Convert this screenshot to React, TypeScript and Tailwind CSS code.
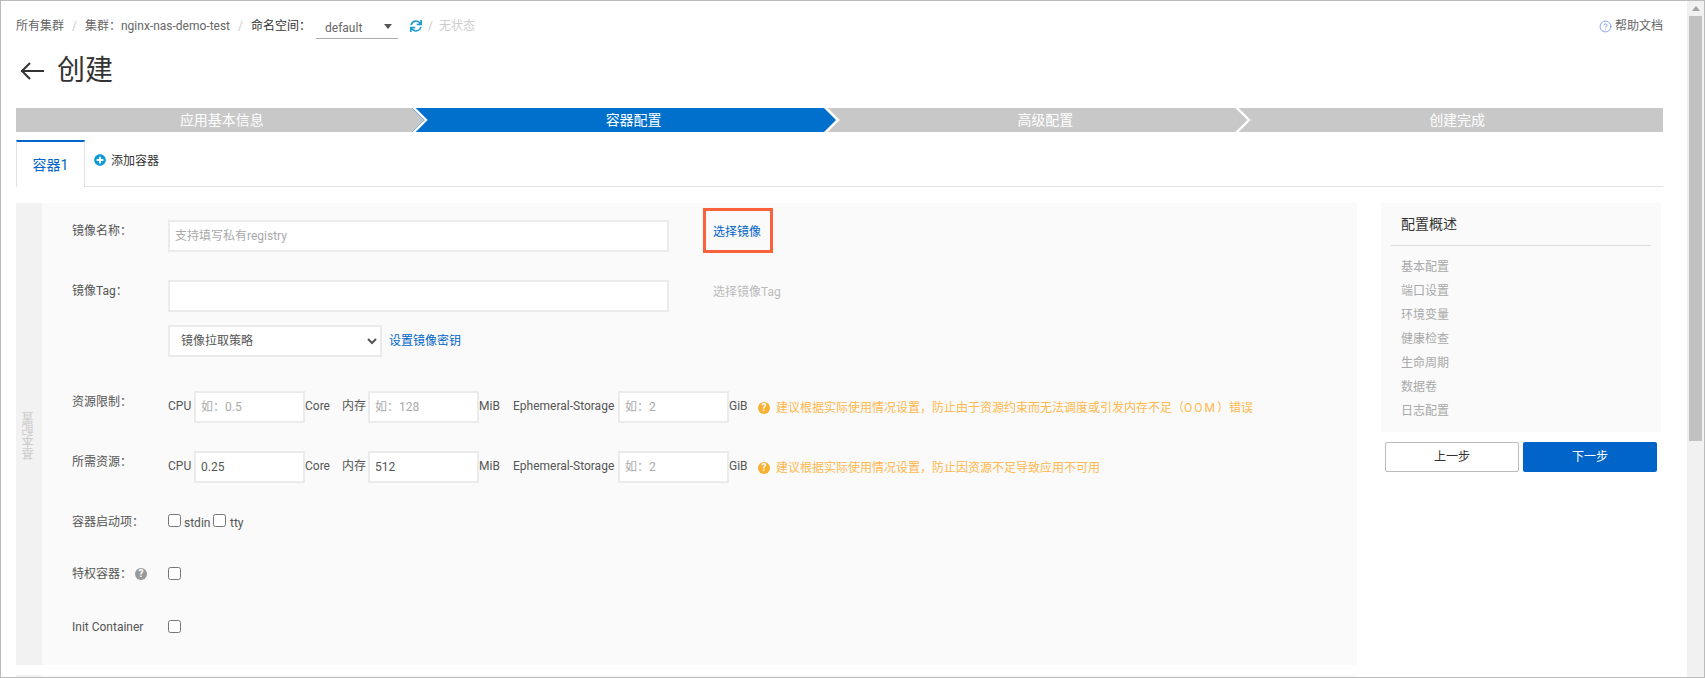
import type { ReactNode } from "react";
import { CircleHelp } from "lucide-react";
import { FaPlusCircle, FaSync } from "react-icons/fa";

const steps = [
  { title: "应用基本信息", active: false },
  { title: "容器配置", active: true },
  { title: "高级配置", active: false },
  { title: "创建完成", active: false },
];

const summary = ["基本配置", "端口设置", "环境变量", "健康检查", "生命周期", "数据卷", "日志配置"];

const inputClass =
  "h-[32px] border-2 border-[#ebebeb] bg-white px-[5px] text-xs text-[#555] outline-none placeholder:text-[#aaa]";

function Hint({ color }: { color: string }) {
  return (
    <span className={`flex h-[12px] w-[12px] shrink-0 items-center justify-center rounded-full text-[10px] leading-none font-bold text-white ${color}`}>
      ?
    </span>
  );
}

function ResourceRow(props: { label: string; cpu?: string; mem?: string; warn: ReactNode; className: string }) {
  return (
    <div className={`flex text-xs text-[#555] ${props.className}`}>
      <label className="w-[126px] shrink-0 pt-[1px] pl-[30px] leading-5">{props.label}</label>
      <span className="w-[26px] pt-[5px] leading-5">CPU</span>
      <input className={`${inputClass} w-[111px]`} placeholder="如：0.5" defaultValue={props.cpu} />
      <span className="w-[37px] pt-[5px] leading-5">Core</span>
      <span className="w-[26px] pt-[5px] leading-5">内存</span>
      <input className={`${inputClass} w-[111px]`} placeholder="如：128" defaultValue={props.mem} />
      <span className="w-[34px] pt-[5px] leading-5">MiB</span>
      <span className="w-[105px] pt-[5px] leading-5 whitespace-nowrap">Ephemeral-Storage</span>
      <input className={`${inputClass} w-[111px]`} placeholder="如：2" />
      <span className="w-[29px] pt-[5px] leading-5">GiB</span>
      <div className="flex h-[32px] items-center gap-[6px] pt-[2px] whitespace-nowrap text-[#ffb84d]">
        <Hint color="bg-[#f7b02f]" />
        <span>{props.warn}</span>
      </div>
    </div>
  );
}

export default function App() {
  return (
    <div className="flex h-[678px] w-[1705px] overflow-hidden border border-[#bbbbbb] bg-white font-['Roboto','Noto_Sans_CJK_SC',sans-serif] text-xs text-[#555]">
      <main className="flex min-w-0 flex-1 flex-col pl-[15px] pr-[24px]">
        <div className="mt-[10px] flex h-[30px] shrink-0 items-center text-[#666]">
          <span>所有集群</span>
          <span className="mx-[8px] text-[#ccc]">/</span>
          <span>集群：nginx-nas-demo-test</span>
          <span className="mx-[8px] text-[#ccc]">/</span>
          <span className="text-[#333]">命名空间：</span>
          <div className="mt-[2px] ml-[5px] flex h-[24px] w-[82px] items-center justify-between border-b border-[#aaa] pr-[6px] pl-[9px]">
            <span className="pt-[2px]">default</span>
            <span className="h-0 w-0 border-x-[4px] border-t-[5px] border-x-transparent border-t-[#555]" />
          </div>
          <FaSync className="ml-[12px] text-[#1f9ad6]" size={12} />
          <span className="mx-[6px] text-[#ccc]">/</span>
          <span className="text-[#ccc]">无状态</span>
          <div className="ml-auto flex items-center gap-[3px]">
            <CircleHelp size={13} strokeWidth={1.4} className="text-[#5d86f0]" />
            <span>帮助文档</span>
          </div>
        </div>

        <div className="flex h-[60px] shrink-0 items-center">
          <svg width="24" height="20" viewBox="0 0 24 20" className="ml-[4px]" fill="none" stroke="#333" strokeWidth="2">
            <path d="M1 10H24M10 2L2 10L10 18" />
          </svg>
          <h1 className="ml-[13px] text-[28px] leading-none font-normal text-[#333]">创建</h1>
        </div>

        <div className="mt-[7px] grid h-[24px] shrink-0 grid-cols-4 text-sm text-white">
          {steps.map((step, i) => (
            <div key={step.title} className={`relative flex items-center justify-center ${step.active ? "bg-[#0070cc]" : "bg-[#c8c8c8]"}`}>
              {step.title}
              {i < 3 && (
                <svg width="16" height="24" viewBox="0 0 16 24" className="absolute top-0 right-0">
                  <path d="M0 0H16V24H0L12 12Z" fill={steps[i + 1].active ? "#0070cc" : "#c8c8c8"} />
                  <path d="M1 -1L14 12L1 25" fill="none" stroke="#fff" strokeWidth="2.4" />
                </svg>
              )}
            </div>
          ))}
        </div>

        <div className="mt-[8px] flex h-[47px] shrink-0 border-b border-[#e2e2e2]">
          <div className="-mb-px flex w-[69px] items-center justify-center border-x border-t-2 border-[#e2e2e2] border-t-[#0064c8] bg-white text-sm text-[#0064c8]">
            容器1
          </div>
          <div className="flex items-start gap-[5px] pt-[11px] pl-[9px] leading-5 text-[#333]">
            <FaPlusCircle size={12} className="mt-[3px] text-[#0f9ad7]" />
            <span>添加容器</span>
          </div>
        </div>

        <div className="mt-[16px] flex min-h-0 flex-1 gap-[24px]">
          <div className="flex w-[1341px] shrink-0 flex-col gap-[10px]">
            <section className="flex h-[462px] shrink-0 bg-[#fafafa]">
              <div className="flex w-[26px] shrink-0 justify-center bg-[#f2f2f2] pt-[209px]">
                <span className="h-fit rotate-180 text-xs text-[#ccc] [writing-mode:vertical-rl]">基本配置</span>
              </div>
              <div className="min-w-0 flex-1">
                <div className="mt-[17px] flex h-[32px]">
                  <label className="w-[126px] shrink-0 pt-[1px] pl-[30px] leading-5">镜像名称：</label>
                  <input className={`${inputClass} w-[501px]`} placeholder="支持填写私有registry" />
                  <div className="-mt-[12px] ml-[34px] h-[45px] w-[70px] shrink-0 border-[3px] border-[#f9623b] pt-[11px] pl-[7px] leading-5 text-[#0064c8]">
                    选择镜像
                  </div>
                </div>
                <div className="mt-[28px] flex h-[32px]">
                  <label className="w-[126px] shrink-0 pt-[1px] pl-[30px] leading-5">镜像Tag：</label>
                  <input className={`${inputClass} w-[501px]`} />
                  <span className="ml-[44px] pt-[2px] leading-5 text-[#bbb]">选择镜像Tag</span>
                </div>
                <div className="mt-[13px] ml-[126px] flex h-[32px] items-center">
                  <select className="h-[32px] w-[214px] border-2 border-[#ebebeb] bg-white pl-[7px] text-xs text-[#555] outline-none">
                    <option>镜像拉取策略</option>
                  </select>
                  <span className="ml-[7px] text-[#0064c8]">设置镜像密钥</span>
                </div>

                <ResourceRow
                  className="mt-[34px]"
                  label="资源限制："
                  warn={
                    <>
                      建议根据实际使用情况设置，防止由于资源约束而无法调度或引发内存不足（<span className="tracking-[2px]">OOM</span>）错误
                    </>
                  }
                />
                <ResourceRow
                  className="mt-[28px]"
                  label="所需资源："
                  cpu="0.25"
                  mem="512"
                  warn="建议根据实际使用情况设置，防止因资源不足导致应用不可用"
                />

                <div className="mt-[31px] flex h-[13px]">
                  <label className="w-[126px] shrink-0 pl-[30px] leading-[17px]">容器启动项：</label>
                  <input type="checkbox" className="m-0 h-[13px] w-[13px]" />
                  <span className="ml-[3px] w-[29px] leading-[18px]">stdin</span>
                  <input type="checkbox" className="m-0 h-[13px] w-[13px]" />
                  <span className="ml-[4px] leading-[18px]">tty</span>
                </div>
                <div className="mt-[40px] flex h-[13px]">
                  <label className="flex w-[126px] shrink-0 items-center gap-[3px] pl-[30px]">
                    特权容器：
                    <Hint color="bg-[#999]" />
                  </label>
                  <input type="checkbox" className="m-0 h-[13px] w-[13px]" />
                </div>
                <div className="mt-[40px] flex h-[13px]">
                  <label className="w-[126px] shrink-0 pl-[30px] leading-[15px]">Init Container</label>
                  <input type="checkbox" className="m-0 h-[13px] w-[13px]" />
                </div>
              </div>
            </section>
            <section className="flex h-[40px] shrink-0 bg-[#fafafa]">
              <div className="w-[26px] bg-[#f2f2f2]" />
            </section>
          </div>

          <aside className="w-[280px] shrink-0">
            <div className="bg-[#fafafa]">
              <div className="mx-[10px] flex h-[43px] items-center border-b border-[#dddddd] pl-[10px] text-sm text-[#333]">配置概述</div>
              <ul className="py-[9px] pl-[20px] text-[#a9a9a9]">
                {summary.map((item) => (
                  <li key={item} className="leading-6">{item}</li>
                ))}
              </ul>
            </div>
            <div className="mt-[10px] flex gap-[4px] px-[4px]">
              <button className="h-[30px] w-[134px] rounded-[2px] border border-[#bbb] bg-white text-xs text-[#333]">上一步</button>
              <button className="h-[30px] w-[134px] rounded-[2px] bg-[#0064c8] text-xs text-white">下一步</button>
            </div>
          </aside>
        </div>
      </main>

      <div className="flex w-[17px] shrink-0 flex-col items-center bg-[#f1f1f1]">
        <div className="flex h-[15px] items-center">
          <span className="h-0 w-0 border-x-[4px] border-b-[5px] border-x-transparent border-b-[#a3a3a3]" />
        </div>
        <div className="h-[425px] w-[13px] bg-[#c1c1c1]" />
      </div>
    </div>
  );
}
